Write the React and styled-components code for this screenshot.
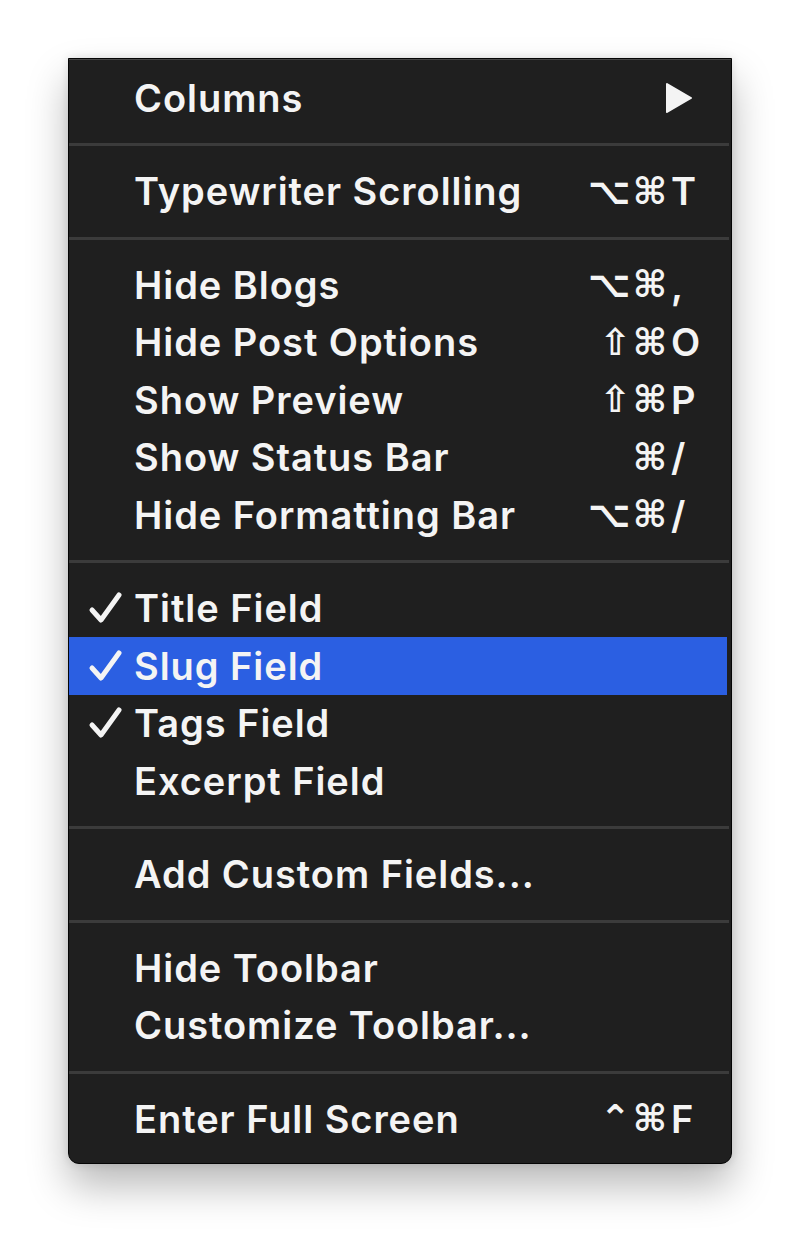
import React from "react";
import styled, { createGlobalStyle } from "styled-components";

const GlobalStyle = createGlobalStyle`
  html, body {
    margin: 0;
    padding: 0;
    background: #ffffff;
  }
  body {
    font-family: "Inter", "Liberation Sans", sans-serif;
    -webkit-font-smoothing: antialiased;
  }
`;

const Page = styled.div`
  height: 1245px;
  padding-top: 58px;
  padding-left: 68px;
  box-sizing: border-box;
`;

const Menu = styled.div`
  width: 664px;
  box-sizing: border-box;
  padding: 10px 0 15px;
  background: #1f1f1f;
  border: 1.5px solid #050505;
  border-radius: 0 0 11px 11px;
  box-shadow: inset 0 1px 0 rgba(255, 255, 255, 0.18),
    0 22px 40px rgba(0, 0, 0, 0.28), 0 0 10px rgba(0, 0, 0, 0.12);
`;

const Row = styled.div`
  display: flex;
  align-items: center;
  height: 57.5px;
  margin-right: 4px;
  background: ${(p) => (p.$active ? "#2b5fe2" : "transparent")};
  color: #f4f4f4;
  font-size: 38px;
  font-weight: 600;
  letter-spacing: 0.95px;
`;

const Check = styled.span`
  width: 65px;
  flex: none;
  display: flex;
  justify-content: flex-end;
  padding-right: 10px;
  box-sizing: border-box;
`;

const Label = styled.span`
  flex: 1;
  white-space: nowrap;
`;

const Shortcut = styled.span`
  display: flex;
  align-items: center;
  padding-right: 14px;
`;

const Mods = styled.span`
  font-family: "DejaVu Sans", sans-serif;
  font-size: 37px;
  font-weight: 700;
  text-align: right;
  letter-spacing: 2px;
`;

const Key = styled.span`
  width: 42px;
  padding-left: 2px;
  font-size: 38px;
  font-weight: 600;
  letter-spacing: 0;
`;

const Arrow = styled.span`
  display: flex;
  padding-right: 34px;
`;

const Separator = styled.div`
  height: 36px;
  display: flex;
  align-items: center;
  margin-right: 2px;
  &::after {
    content: "";
    flex: 1;
    height: 3px;
    background: #3b3b3b;
  }
`;

function CheckIcon() {
  return (
    <svg width="36" height="34" viewBox="0 0 36 34">
      <path
        d="M4 19 L13 29 L31 4"
        fill="none"
        stroke="#f4f4f4"
        strokeWidth="5"
        strokeLinecap="round"
        strokeLinejoin="round"
      />
    </svg>
  );
}

function SubmenuIcon() {
  return (
    <svg width="28" height="34" viewBox="0 0 28 34">
      <path
        d="M2 3 L26 17 L2 31 Z"
        fill="#f4f4f4"
        stroke="#f4f4f4"
        strokeWidth="2"
        strokeLinejoin="round"
      />
    </svg>
  );
}

const menu = [
  [{ label: "Columns", submenu: true }],
  [{ label: "Typewriter Scrolling", mods: "⌥⌘", key: "T" }],
  [
    { label: "Hide Blogs", mods: "⌥⌘", key: "," },
    { label: "Hide Post Options", mods: "⇧⌘", key: "O" },
    { label: "Show Preview", mods: "⇧⌘", key: "P" },
    { label: "Show Status Bar", mods: "⌘", key: "/" },
    { label: "Hide Formatting Bar", mods: "⌥⌘", key: "/" },
  ],
  [
    { label: "Title Field", checked: true },
    { label: "Slug Field", checked: true, active: true },
    { label: "Tags Field", checked: true },
    { label: "Excerpt Field" },
  ],
  [{ label: "Add Custom Fields..." }],
  [{ label: "Hide Toolbar" }, { label: "Customize Toolbar..." }],
  [{ label: "Enter Full Screen", mods: "⌃⌘", key: "F" }],
];

function MenuItem({ item }) {
  return (
    <Row $active={item.active}>
      <Check>{item.checked && <CheckIcon />}</Check>
      <Label>{item.label}</Label>
      {item.submenu && (
        <Arrow>
          <SubmenuIcon />
        </Arrow>
      )}
      {item.key && (
        <Shortcut>
          <Mods>{item.mods}</Mods>
          <Key>{item.key}</Key>
        </Shortcut>
      )}
    </Row>
  );
}

export default function App() {
  return (
    <>
      <GlobalStyle />
      <Page>
        <Menu>
          {menu.map((group, gi) => (
            <React.Fragment key={gi}>
              {gi > 0 && <Separator />}
              {group.map((item) => (
                <MenuItem key={item.label} item={item} />
              ))}
            </React.Fragment>
          ))}
        </Menu>
      </Page>
    </>
  );
}
